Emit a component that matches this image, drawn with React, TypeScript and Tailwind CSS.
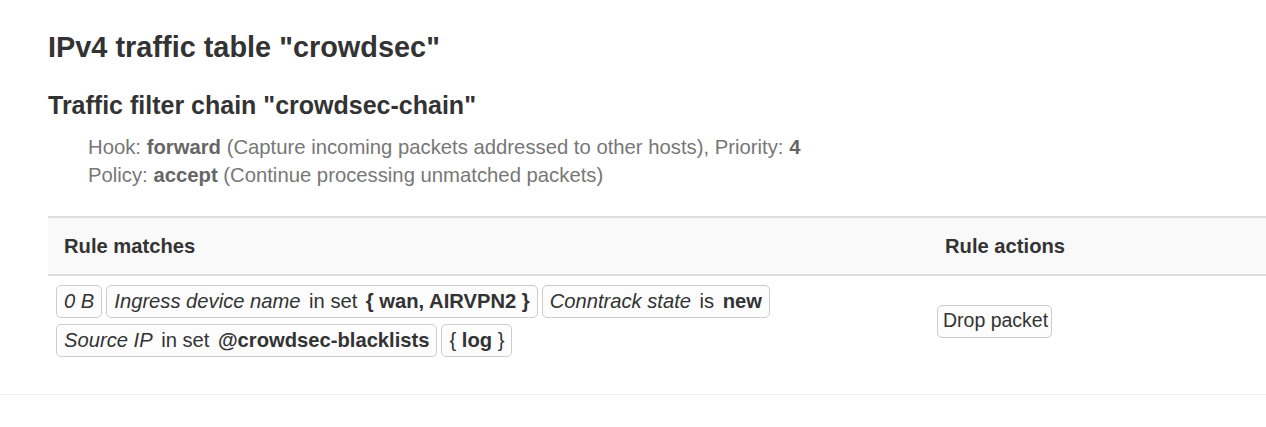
import React from "react";

function Badge({ children, pad = "px-[7px]" }: { children: React.ReactNode; pad?: string }) {
  return (
    <span className={"inline-flex items-center gap-[8.5px] h-[33px] border border-[#cccccc] rounded-[5px] bg-[#fcfcfc] text-[#333] whitespace-nowrap " + pad}>
      {children}
    </span>
  );
}

export default function App() {
  return (
    <div className="bg-white min-h-[427px] font-['Liberation_Sans',Arial,sans-serif] text-[#333]">
      <div className="pl-[48px] pt-[31px]">
        <h3 className="text-[28.9px] font-bold leading-[32px] text-[#333]">IPv4 traffic table "crowdsec"</h3>
        <h4 className="mt-[27px] text-[25px] font-bold leading-[30px] text-[#333]">Traffic filter chain "crowdsec-chain"</h4>
        <div className="mt-[13px] pl-[40px] text-[20.3px] leading-[28px] text-[#777]">
          <div>
            Hook: <strong className="text-[#666]">forward</strong> (Capture incoming packets addressed to other hosts), Priority: <strong className="text-[#666]">4</strong>
          </div>
          <div>
            Policy: <strong className="text-[#666]">accept</strong> (Continue processing unmatched packets)
          </div>
        </div>
        <div className="mt-[27px] border-t-2 border-[#dddddd] text-[20.2px]">
          <div className="flex bg-[#f9f9f9] border-b-2 border-[#dddddd] h-[58px] items-center font-bold">
            <div className="w-[881px] pl-[16px]">Rule matches</div>
            <div className="flex-1 pl-[16px]">Rule actions</div>
          </div>
          <div className="flex items-center pt-[9px] pb-[9px]">
            <div className="w-[881px] pl-[8px] flex flex-wrap gap-x-[4px] gap-y-[6px]">
              <Badge><i>0 B</i></Badge>
              <Badge><i>Ingress device name</i><span>in set</span><b>{"{ wan, AIRVPN2 }"}</b></Badge>
              <Badge><i>Conntrack state</i><span>is</span><b>new</b></Badge>
              <Badge><i>Source IP</i><span>in set</span><b>@crowdsec-blacklists</b></Badge>
              <Badge><span>{"{"}&nbsp;<b>log</b>&nbsp;{"}"}</span></Badge>
            </div>
            <div className="flex-1 pl-[8px]">
              <Badge pad="pl-[5px] pr-[3px]"><span className="text-[19.5px]">Drop packet</span></Badge>
            </div>
          </div>
        </div>
      </div>
      <div className="mt-[28px] border-t border-[#eeeeee]"></div>
    </div>
  );
}
